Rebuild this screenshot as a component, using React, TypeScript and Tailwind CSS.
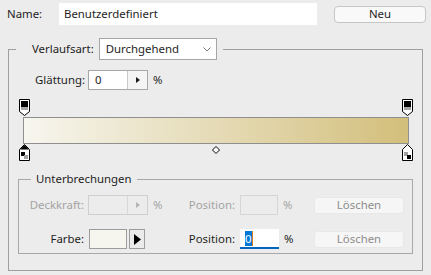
import type { ReactNode } from "react";

const FONT = "font-['Noto_Sans','Liberation_Sans',sans-serif]";

function SpinBox({ value, disabled }: { value?: string; disabled?: boolean }) {
  return (
    <div
      className={`flex h-[20px] w-[60px] border ${
        disabled ? "border-[#d0d0d0] bg-[#ececec]" : "border-[#a8a8a8] bg-white"
      }`}
    >
      <div className="flex flex-1 items-center pl-[6px] leading-none">{value}</div>
      <div
        className={`flex w-[20px] items-center justify-center border-l ${
          disabled ? "border-[#d8d8d8]" : "border-[#c8c8c8] bg-[#f4f4f4]"
        }`}
      >
        <svg width="4" height="6" viewBox="0 0 4 6">
          <path d="M0 0 L4 3 L0 6 Z" fill={disabled ? "#b4b4b4" : "#1a1a1a"} />
        </svg>
      </div>
    </div>
  );
}

function OpacityStop() {
  return (
    <svg width="11" height="17" viewBox="0 0 11 17">
      <path d="M0.5 0.5 H10.5 V12.5 L5.5 16.5 L0.5 12.5 Z" fill="#ffffff" stroke="#000" />
      <rect x="2" y="2" width="7" height="6" fill="#000" />
      <rect x="2" y="8" width="7" height="3" fill="#a6a6a6" />
    </svg>
  );
}

function ColorStop({ selected, flip }: { selected?: boolean; flip?: boolean }) {
  return (
    <svg width="11" height="17" viewBox="0 0 11 17">
      <path d="M5.5 0.5 L10.5 5.5 V16.5 H0.5 V5.5 Z" fill="#ffffff" stroke="#000" />
      {selected && <path d="M5.5 1 L10 5.5 H1 Z" fill="#000" />}
      <rect x="2" y="8" width="7" height="7" fill="#ffffff" />
      {flip ? (
        <>
          <rect x="2" y="8" width="4" height="4" fill="#a0a0a0" />
          <rect x="5" y="11" width="4" height="4" fill="#000" />
        </>
      ) : (
        <>
          <rect x="2" y="8" width="4" height="4" fill="#000" />
          <rect x="5" y="11" width="4" height="4" fill="#a0a0a0" />
        </>
      )}
    </svg>
  );
}

function Label({ children, disabled, w }: { children: ReactNode; disabled?: boolean; w: string }) {
  return (
    <span className={`${w} shrink-0 text-right ${disabled ? "text-[#a3a3a3]" : "text-[#1e1e1e]"}`}>
      {children}
    </span>
  );
}

function LoeschenButton() {
  return (
    <button
      type="button"
      className="ml-auto flex h-[17px] w-[90px] items-center justify-center rounded-[3px] border border-[#e8e8e8] bg-[#f6f6f6] text-[#8c8c8c]"
    >
      Löschen
    </button>
  );
}

export default function App() {
  return (
    <div className={`h-[275px] w-[431px] overflow-hidden bg-[#ececec] text-[11.4px] text-[#1e1e1e] ${FONT}`}>
      <div className="flex items-center pt-[3px]">
        <span className="ml-[7px] w-[52px]">Name:</span>
        <div className="flex h-[22px] w-[258px] items-center bg-white pl-[5px]">Benutzerdefiniert</div>
        <button
          type="button"
          className="ml-auto mr-[5px] flex h-[17px] w-[92px] items-center justify-center rounded-[4px] border border-[#c6c6c6] bg-[#f9f9f9]"
        >
          Neu
        </button>
      </div>

      <fieldset className="mx-[8px] mt-[13px] h-[233px] border border-[#a0a0a0] p-0">
        <legend className="ml-[7px] flex items-center pl-[16px] pr-[6px]">
          <span>Verlaufsart:</span>
          <div className="ml-[5px] flex h-[22px] w-[118px] items-center border border-[#a6a6a6] bg-white pl-[6px] pr-[5px]">
            <span className="flex-1">Durchgehend</span>
            <svg width="8" height="5" viewBox="0 0 8 5">
              <path d="M0.5 0.5 L4 4 L7.5 0.5" fill="none" stroke="#7a7a7a" />
            </svg>
          </div>
        </legend>

        <div className="mt-[10px] flex items-center">
          <Label w="w-[76px]">Glättung:</Label>
          <div className="ml-[3px]">
            <SpinBox value="0" />
          </div>
          <span className="ml-[5px]">%</span>
        </div>

        <div className="mt-[9px] pl-[10px] pr-[9px]">
          <div className="flex justify-between">
            <OpacityStop />
            <OpacityStop />
          </div>
          <div className="mx-[4px] mt-[1px] h-[27px] border border-[#8f8f8f] bg-gradient-to-r from-[#f7f6ef] to-[#d3bf7b]" />
          <div className="relative flex justify-between">
            <ColorStop selected />
            <svg className="absolute left-[193px] top-[2px]" width="8" height="8" viewBox="0 0 8 8">
              <path d="M4 0.5 L7.5 4 L4 7.5 L0.5 4 Z" fill="#fff" stroke="#000" />
            </svg>
            <ColorStop flip />
          </div>
        </div>

        <fieldset className="mx-[9px] mt-[11px] h-[82px] border border-[#a8a8a8] p-0">
          <legend className="ml-[12px] px-[5px] leading-[14px]">Unterbrechungen</legend>

          <div className="mt-[9px] flex items-center pr-[8px]">
            <Label disabled w="w-[65px]">Deckkraft:</Label>
            <div className="ml-[4px]">
              <SpinBox disabled />
            </div>
            <span className="ml-[5px] w-[10px] text-[#a3a3a3]">%</span>
            <Label disabled w="w-[72px]">Position:</Label>
            <div className="ml-[5px] h-[20px] w-[38px] border border-[#d6d6d6]" />
            <span className="ml-[5px] text-[#a3a3a3]">%</span>
            <LoeschenButton />
          </div>

          <div className="mt-[14px] flex items-center pr-[8px]">
            <Label w="w-[65px]">Farbe:</Label>
            <div className="ml-[5px] h-[20px] w-[38px] border border-[#9c9c9c] bg-[#f6f6ef]" />
            <div className="ml-[2px] flex h-[20px] w-[16px] items-center justify-center border border-[#9c9c9c] bg-[#ebebeb]">
              <svg width="7" height="11" viewBox="0 0 7 11">
                <path d="M0 0 L7 5.5 L0 11 Z" fill="#000" />
              </svg>
            </div>
            <Label w="w-[90px]">Position:</Label>
            <div className="ml-[5px] flex h-[20px] w-[39px] items-center border-b-2 border-[#0067c0] bg-white pl-[5px]">
              <span className="bg-[#0078d7] leading-[15px] text-white">0</span>
              <span className="h-[15px] w-[1px] bg-[#e07a1f]" />
            </div>
            <span className="ml-[5px]">%</span>
            <LoeschenButton />
          </div>
        </fieldset>
      </fieldset>
    </div>
  );
}
